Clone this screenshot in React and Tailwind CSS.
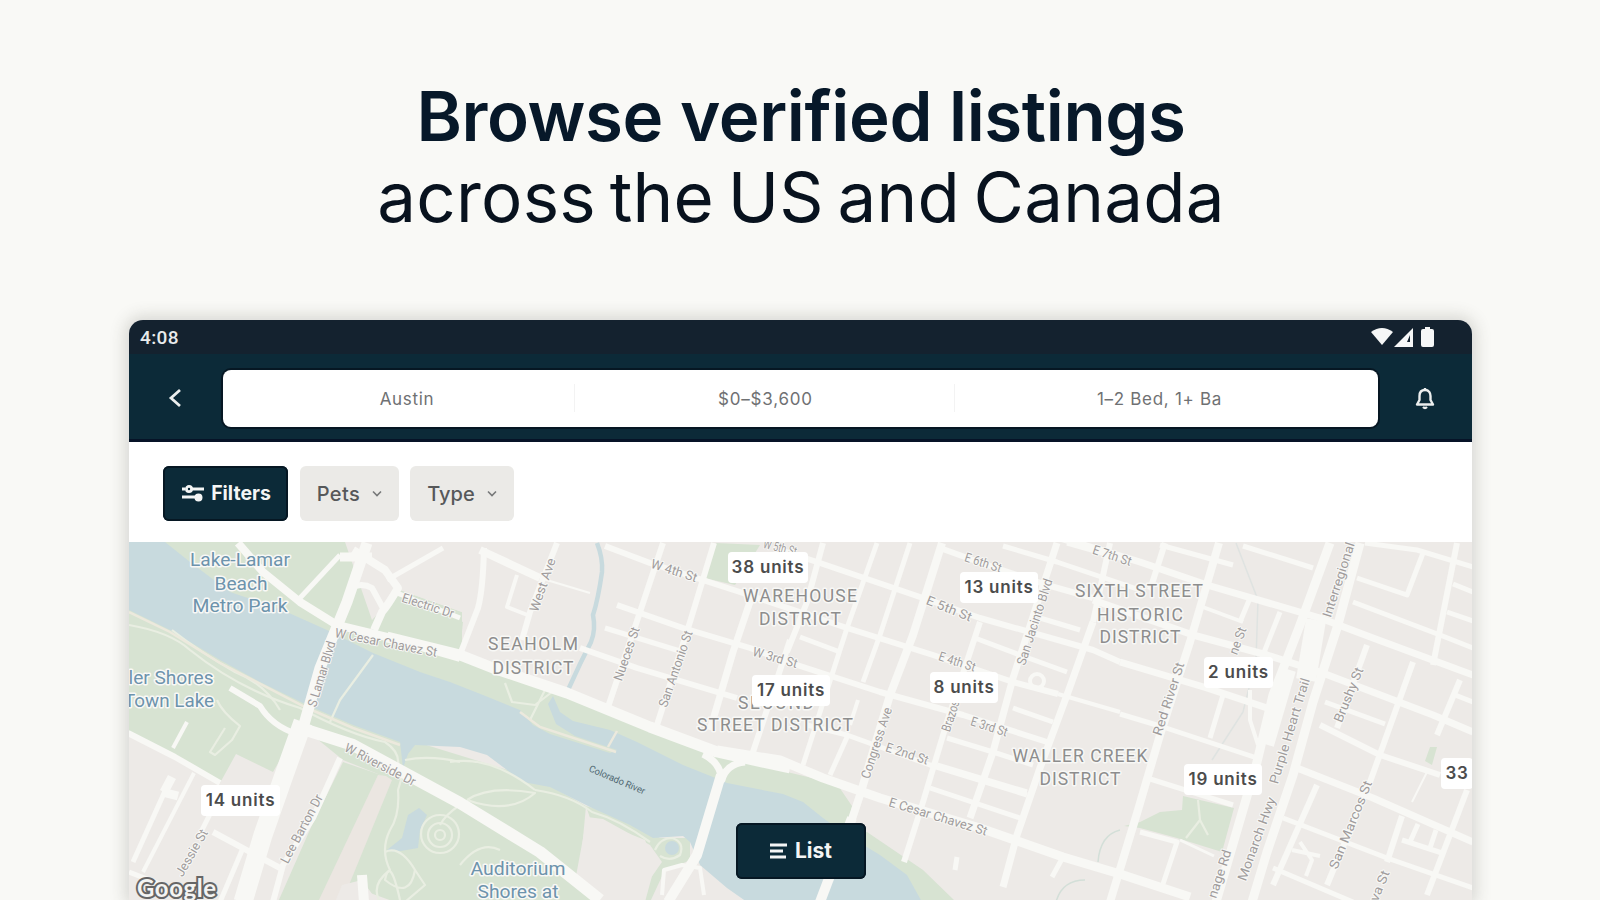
import React from 'react';

const streets = [
    // north shore blocks
    { d: 'M480 550 L540 578', w: 8 },
    { d: 'M540 578 L590 593', w: 2 },
    { d: 'M484 548 Q483 590 478 608 L461 652', w: 6 },
    { d: 'M557 543 L530 612 L522 640', w: 6 },
    { d: 'M517 575 L507 607 L530 616', w: 4 },
    { d: 'M397 593 L460 618', w: 5 },
    { d: 'M605 546 L650 563 L743 593 L847 628 L933 655 L1013 682 L1058 694', w: 6 },
    { d: 'M1058 694 L1120 712', w: 4 },
    { d: 'M617 605 L683 628 L750 648 L797 665 L880 692 L963 715 L1047 742', w: 6 },
    { d: 'M580 648 L637 668 L737 698', w: 6 },
    { d: 'M605 628 L683 652', w: 5 },
    { d: 'M807 725 L847 735 L930 765 L1027 795', w: 5 },
    { d: 'M800 637 L840 652', w: 5 },
    { d: 'M780 550 L817 562 L923 598 L980 618 L1093 650 L1120 662', w: 6 },
    { d: 'M663 543 L640 612 L607 710', w: 6 },
    { d: 'M714 543 L690 622 L657 725', w: 6 },
    { d: 'M754 590 L733 652 L710 730', w: 7 },
    { d: 'M790 640 L753 752', w: 6 },
    { d: 'M823 543 L807 602 L787 652', w: 6 },
    { d: 'M877 543 L847 628 L803 765', w: 5 },
    { d: 'M858 700 L850 725', w: 4 },
    { d: 'M910 543 L880 635 L863 682', w: 5 },
    { d: 'M848 735 L830 775', w: 5 },
    { d: 'M942 543 L913 635 L890 695 L860 795 L850 825', w: 8 },
    { d: 'M980 622 L947 722 L923 802 L904 862', w: 6 },
    { d: 'M1057 543 L1013 678 L993 752 L970 818', w: 7 },
    { d: 'M1093 622 L1067 695 L1040 768 L1017 835 L1003 887', w: 7 },
    { d: 'M1110 543 L1093 622', w: 6 },
    { d: 'M947 738 L993 752 L1033 765', w: 5 },
    { d: 'M937 765 L1027 792', w: 5 },
    { d: 'M930 788 L1020 818', w: 5 },
    { d: 'M1013 708 L1053 722', w: 5 },
    { d: 'M975 638 L1020 655 L1067 672', w: 5 },
    { d: 'M1040 618 L1080 630', w: 5 },
    { d: 'M940 548 L987 565 L1047 585 L1093 598', w: 6 },
    { d: 'M1003 546 L1057 562 L1140 590', w: 5 },
    { d: 'M1067 543 L1120 558', w: 5 },
    { d: 'M957 857 L955 870', w: 5 },
    { d: 'M1063 857 L1052 877', w: 5 },
    // east side grid
    { d: 'M1060 538 L1140 562 L1207 585 L1320 618 L1373 638 L1473 675', w: 7 },
    { d: 'M1160 545 L1233 565', w: 5 },
    { d: 'M1243 546 L1313 568', w: 5 },
    { d: 'M1200 606 L1243 622', w: 4 },
    { d: 'M1093 600 L1193 635 L1267 655 L1320 672 L1433 715 L1473 732', w: 7 },
    { d: 'M1120 662 L1207 688 L1267 708', w: 7 },
    { d: 'M1120 714 L1160 726 L1257 758', w: 5 },
    { d: 'M1320 725 L1380 755 L1440 775', w: 6 },
    { d: 'M1147 778 L1233 805', w: 5 },
    { d: 'M1297 768 L1373 798 L1473 842', w: 7 },
    { d: 'M1283 818 L1387 858 L1473 888', w: 5 },
    { d: 'M1273 868 L1353 902', w: 5 },
    { d: 'M1357 578 L1407 595 L1423 553', w: 5 },
    { d: 'M1353 602 L1440 635 L1473 648', w: 5 },
    { d: 'M1365 543 L1417 550 L1473 567', w: 5 },
    { d: 'M1453 584 L1473 592 M1447 612 L1473 621', w: 5 },
    { d: 'M1325 702 L1385 724', w: 5 },
    { d: 'M1455 695 L1473 702', w: 5 },
    { d: 'M1165 543 L1150 590', w: 6 },
    { d: 'M1219 543 L1190 642 L1160 735 L1138 810 L1110 902', w: 8 },
    { d: 'M1250 598 L1240 622', w: 5 },
    { d: 'M1280 612 L1263 655', w: 5 },
    { d: 'M1223 695 L1210 738', w: 5 },
    { d: 'M1250 690 L1250 720 L1258 745', w: 4 },
    { d: 'M1367 645 L1337 728', w: 6 },
    { d: 'M1413 662 L1370 782 L1327 885', w: 6 },
    { d: 'M1457 543 L1433 665', w: 6 },
    { d: 'M1460 680 L1437 735', w: 6 },
    { d: 'M1428 770 L1412 802', w: 2 },
    { d: 'M1467 790 L1427 895', w: 6 },
    { d: 'M1402 816 L1387 862', w: 6 },
    { d: 'M1317 785 L1273 885', w: 6 },
    { d: 'M1418 824 L1410 842 M1436 830 L1430 848 M1402 840 L1442 853', w: 5 },
    { d: 'M1300 842 L1312 860 L1306 876 M1292 850 L1320 856', w: 4 },
    { d: 'M1140 832 L1177 842 L1163 884', w: 5 },
    { d: 'M1180 840 L1214 856', w: 3 },
    // south west
    { d: 'M230 688 L260 706 Q272 726 297 734', w: 6 },
    { d: 'M128 733 L175 757 L220 783', w: 6 },
    { d: 'M187 722 L173 748', w: 4 },
    { d: 'M194 773 L143 872', w: 4 },
    { d: 'M170 780 L133 862', w: 5 },
    { d: 'M172 777 L164 792 M162 792 L178 796', w: 9 },
    { d: 'M213 832 L280 868', w: 6 },
    { d: 'M243 848 L220 902', w: 5 },
    { d: 'M212 810 L200 834', w: 5 },
    { d: 'M340 758 L313 818 L283 865 L273 902', w: 6 },
    { d: 'M362 875 L364 902', w: 10 },
    { d: 'M129 872 L160 884', w: 5 },
];

const mainRoads = [
    { d: 'M238 543 L263 572 L300 602 L337 625 L387 637 L460 658', w: 8 },
    { d: 'M387 637 L460 655 L493 668 L567 693 L650 727 L717 752 L790 768', w: 11 },
    { d: 'M717 750 L780 760 L823 778 L880 798 L980 828 L1063 857 L1120 874 L1190 897', w: 9 },
    { d: 'M367 543 L347 602 L320 668 L303 728', w: 11 },
    { d: 'M303 722 L283 778 L263 835 L243 902', w: 19 },
    { d: 'M300 728 L353 745 L460 803 L540 852 L600 900', w: 12 },
    { d: 'M340 555 L300 598', w: 5 },
    { d: 'M353 550 L385 570 L398 588 Q388 605 382 612 L374 630', w: 8 },
    { d: 'M443 548 L387 580', w: 5 },
    { d: 'M350 588 Q362 582 372 588 L384 610', w: 6 },
    { d: 'M340 557 L372 557', w: 9 },
    { d: 'M703 754 Q720 762 722 780 Q726 764 745 762', w: 7 },
    { d: 'M721 775 L697 855 L668 902', w: 10 },
    { d: 'M852 818 L820 902', w: 10 },
    { d: 'M662 895 L664 870 L682 865 L700 868 L704 895', w: 4 },
    { d: 'M1330 543 L1300 625 L1273 695 L1257 762 L1216 902', w: 9 },
    { d: 'M1360 543 L1337 628 L1313 702 L1293 775 L1267 852 L1252 902', w: 9 },
    { d: 'M1316 620 L1306 680', w: 20 },
    { d: 'M1290 670 L1268 745', w: 12 },
];

const trails = [
    'M129 625 Q170 632 190 650 Q240 690 300 708 Q350 735 385 742 Q400 752 398 765',
    'M172 630 Q200 652 235 672 Q265 684 280 710',
    'M373 655 L340 700 L330 722',
    'M217 700 Q222 712 240 726 L232 740 L215 755 L210 752 L225 728',
    'M405 760 Q430 755 460 762 M404 770 L398 790 Q400 815 390 830 Q380 850 390 870 Q370 885 380 902',
    'M467 800 Q490 785 535 793 Q510 815 467 800 M450 762 Q490 755 535 790',
    'M535 790 Q570 795 592 812 Q620 820 650 842',
    'M505 683 L512 702 L535 705 L552 692 M530 720 L545 690',
    'M385 852 Q400 845 415 870 Q410 900 385 880 Q390 855 400 900',
    'M415 870 L425 885 L405 902',
    'M460 805 Q445 815 440 825 M460 865 Q480 840 500 850',
    'M1198 800 L1200 820 L1208 835 M1200 820 L1186 838',
    'M655 850 Q660 838 672 838 Q685 842 680 855 Q670 862 660 856',
];

const streetLabels = [
    { t: 'W Cesar Chavez St', x: 386, y: 643, a: 11, len: 104 },
    { t: 'S Lamar Blvd', x: 322, y: 674, a: -73, len: 68 },
    { t: 'Electric Dr', x: 428, y: 606, a: 18, len: 54 },
    { t: 'W Riverside Dr', x: 380, y: 765, a: 27, len: 78 },
    { t: 'Lee Barton Dr', x: 302, y: 829, a: -62, len: 76 },
    { t: 'Jessie St', x: 192, y: 853, a: -60, len: 52 },
    { t: 'West Ave', x: 543, y: 585, a: -71, len: 56 },
    { t: 'W 4th St', x: 674, y: 571, a: 18, len: 48 },
    { t: 'Nueces St', x: 627, y: 654, a: -71, len: 56 },
    { t: 'San Antonio St', x: 676, y: 669, a: -71, len: 80 },
    { t: 'W 3rd St', x: 775, y: 658, a: 16, len: 46 },
    { t: 'W 5th St', x: 780, y: 548, a: 14, len: 34 },
    { t: 'E 5th St', x: 949, y: 609, a: 22, len: 48 },
    { t: 'E 6th St', x: 983, y: 563, a: 18, len: 38 },
    { t: 'E 7th St', x: 1112, y: 556, a: 18, len: 40 },
    { t: 'E 4th St', x: 957, y: 662, a: 18, len: 38 },
    { t: 'E 3rd St', x: 989, y: 727, a: 18, len: 38 },
    { t: 'E 2nd St', x: 907, y: 754, a: 18, len: 44 },
    { t: 'E Cesar Chavez St', x: 938, y: 817, a: 17, len: 102 },
    { t: 'Congress Ave', x: 877, y: 743, a: -72, len: 74 },
    { t: 'Brazos', x: 951, y: 716, a: -72, len: 32 },
    { t: 'San Jacinto Blvd', x: 1035, y: 622, a: -72, len: 90 },
    { t: 'Red River St', x: 1169, y: 699, a: -72, len: 76 },
    { t: 'ne St', x: 1238, y: 641, a: -70, len: 28 },
    { t: 'Interregional', x: 1339, y: 580, a: -72, len: 78 },
    { t: 'Brushy St', x: 1349, y: 695, a: -68, len: 58 },
    { t: 'Purple Heart Trail', x: 1290, y: 731, a: -73, len: 110 },
    { t: 'Monarch Hwy', x: 1257, y: 839, a: -70, len: 88 },
    { t: 'San Marcos St', x: 1351, y: 825, a: -68, len: 94 },
    { t: 'nage Rd', x: 1220, y: 874, a: -72, len: 50 },
    { t: 'va St', x: 1380, y: 886, a: -68, len: 32 },
];

const districts = [
    { t: 'SEAHOLM', x: 533, y: 650, len: 90 },
    { t: 'DISTRICT', x: 533, y: 674, len: 81 },
    { t: 'WAREHOUSE', x: 800, y: 602, len: 114 },
    { t: 'DISTRICT', x: 800, y: 625, len: 82 },
    { t: 'SECOND', x: 776, y: 709, len: 76 },
    { t: 'STREET DISTRICT', x: 775, y: 731, len: 156 },
    { t: 'SIXTH STREET', x: 1139, y: 597, len: 128 },
    { t: 'HISTORIC', x: 1140, y: 621, len: 86 },
    { t: 'DISTRICT', x: 1140, y: 643, len: 81 },
    { t: 'WALLER CREEK', x: 1080, y: 762, len: 135 },
    { t: 'DISTRICT', x: 1080, y: 785, len: 81 },
];

const parks = [
    { t: 'Lake-Lamar', x: 240, y: 566, len: 100 },
    { t: 'Beach', x: 241, y: 590, len: 53 },
    { t: 'Metro Park', x: 240, y: 612, len: 95 },
    { t: 'ler Shores', x: 171, y: 684, len: 85 },
    { t: 'Town Lake', x: 169, y: 707, len: 90 },
    { t: 'Auditorium', x: 518, y: 875, len: 95 },
    { t: 'Shores at', x: 518, y: 898, len: 81 },
];

const pins = [
    { t: '38 units', c: 'left-[599px] top-[10px] w-[80px]' },
    { t: '13 units', c: 'left-[831px] top-[30px] w-[78px]' },
    { t: '17 units', c: 'left-[623px] top-[133px] w-[78px]' },
    { t: '8 units', c: 'left-[801px] top-[130px] w-[68px]' },
    { t: '2 units', c: 'left-[1075px] top-[115px] w-[69px]' },
    { t: '19 units', c: 'left-[1055px] top-[222px] w-[78px]' },
    { t: '14 units', c: 'left-[72px] top-[243px] w-[79px]' },
    { t: '33', c: 'left-[1312px] top-[216px] w-[32px]' },
];

const MapCanvas = () => (
    <svg className="block w-full h-full" viewBox="129 542 1343 358" preserveAspectRatio="xMinYMin slice">
        <rect x="129" y="542" width="1343" height="358" fill="#edeae7" />

        {/* parks */}
        <g fill="#d7e3d2">
            <path d="M160 542 H345 L372 620 L400 590 L462 612 V652 L567 695 L717 755 L837 784 L852 806 L848 840 L780 800 L560 760 L129 640 Z" />
            <path d="M867 832 L923 870 L956 902 H900 L850 835 Z" />
            <path d="M129 600 L310 700 L410 740 L540 780 L586 806 L580 870 L600 902 H395 L340 882 L383 776 L343 760 L300 725 L273 772 L236 754 L220 783 L129 735 Z" />
            <path d="M343 762 L384 776 L328 902 H278 L312 825 Z" />
            <path d="M586 806 L620 815 L660 838 L690 838 L690 860 L664 872 L650 902 H645 L655 865 L645 840 L590 818 Z" />
            <path d="M716 543 L760 545 L735 585 L704 578 Z" />
            <path d="M450 618 L463 622 L460 650 L450 648 Z" />
            <path d="M1140 822 L1160 812 L1182 810 L1183 796 L1234 808 L1222 852 L1177 838 L1140 828 L1124 826 Z" />
            <path d="M1430 747 L1437 747 L1432 765 L1425 761 Z" />
        </g>
        <path d="M384 542 H462 V612 L400 590 L384 565 Z" fill="#edeae7" />
        <path d="M386 776 L392 780 L342 902 H318 L378 775 Z" fill="#ebe6e1" />
        <path d="M342 885 L362 880 L378 902 H335 Z" fill="#edeae7" />
        <path d="M587 817 L603 819 L650 845 L662 862 L646 885 L640 902 H600 L576 876 Z" fill="#edeae7" />

        {/* river */}
        <path
            fill="#c8dade"
            d="M129 542 L165 542 L190 562 L230 592 L280 609 L327 630 L373 653 L420 672 L450 682 L483 695 L520 710 L533 725 L550 734 L610 753 L617 750 L575 736 L556 724 L548 704 L553 696 L560 712 L573 721 L610 730 L637 742 L683 765 L713 777 L727 783 L783 794 L803 802 L823 818 L847 835 L880 855 L907 875 L922 902 L747 902 L727 888 L700 865 L690 842 L683 836 L653 838 L630 825 L590 807 L550 787 L523 782 L487 755 L460 747 L415 745 L408 754 L403 768 L400 742 L353 725 L307 705 L260 682 L220 660 L170 630 L129 610 Z"
        />
        <path d="M597 543 Q603 558 602 572 Q598 600 593 615 Q596 630 591 642 L580 664 L568 690" fill="none" stroke="#c8dade" strokeWidth="4.5" />
        <path d="M419 808 L427 815 L420 830 L418 848 L395 852 L387 850 L402 838 L408 815 Z" fill="#c8dade" />
        <circle cx="672" cy="848" r="7" fill="#c8dade" />
        <path d="M1236 543 L1258 600 L1256 660 L1243 712 L1212 760" fill="none" stroke="#dfe3e1" strokeWidth="1.5" />
        <path d="M1120 830 Q1100 835 1098 862 M1085 880 Q1062 880 1056 902" fill="none" stroke="#d3dfd8" strokeWidth="1.5" />

        <g fill="none" stroke="#e9eee2" strokeWidth="2.2" strokeLinejoin="round">
            {trails.map((d) => (
                <path key={d} d={d} />
            ))}
            <circle cx="440" cy="834" r="19" />
            <circle cx="440" cy="835" r="12" />
            <circle cx="440" cy="835" r="5" />
        </g>
        <path d="M129 612 L170 632 L220 663 L307 708 L353 728 L400 745 M520 712 L540 727 L616 752 M608 747 L617 731" fill="none" stroke="#ece9dd" strokeWidth="2.5" />

        <g fill="none" stroke="#f8f8f5" strokeLinejoin="round">
            {streets.map((s) => (
                <path key={s.d} d={s.d} strokeWidth={s.w} />
            ))}
            {mainRoads.map((s) => (
                <path key={s.d} d={s.d} strokeWidth={s.w} />
            ))}
            <circle cx="1037" cy="681" r="7" strokeWidth="4" />
        </g>

        {/* labels */}
        <g
            fontFamily="Roboto, sans-serif"
            textAnchor="middle"
            stroke="#f8f8f6"
            strokeWidth="3"
            strokeLinejoin="round"
            style={{ paintOrder: 'stroke' }}
        >
            <g fontSize="13" fill="#a09c9c">
                {streetLabels.map((l) => (
                    <text
                        key={l.t + l.x}
                        transform={`translate(${l.x} ${l.y}) rotate(${l.a})`}
                        textLength={l.len}
                        lengthAdjust="spacingAndGlyphs"
                        dy="4"
                        strokeWidth="2"
                    >
                        {l.t}
                    </text>
                ))}
            </g>
            <text transform="translate(617 780) rotate(23)" fontSize="9.5" fill="#4f6771" textLength="60" dy="3" stroke="none">
                Colorado River
            </text>
            <g fontSize="17.5" fill="#8d8d8d">
                {districts.map((l) => (
                    <text key={l.t + l.y + l.x} x={l.x} y={l.y} textLength={l.len}>
                        {l.t}
                    </text>
                ))}
            </g>
            <g fontSize="18" fill="#6d93ac">
                {parks.map((l) => (
                    <text key={l.t} x={l.x} y={l.y} textLength={l.len} lengthAdjust="spacingAndGlyphs">
                        {l.t}
                    </text>
                ))}
            </g>
        </g>
        <text
            x="137"
            y="897"
            fontFamily="Lato, sans-serif"
            fontSize="24"
            fontWeight="700"
            fill="#f4f4f2"
            stroke="#666666"
            strokeWidth="4"
            textLength="79"
            style={{ paintOrder: 'stroke' }}
        >
            Google
        </text>
    </svg>
);

const ChevronDown = () => (
    <svg className="w-[10px] h-[8px]" viewBox="0 0 10 8" fill="none" stroke="#77797a" strokeWidth="1.6">
        <path d="M1 1.5 L5 5.5 L9 1.5" />
    </svg>
);

const StatusBar = () => (
    <div className="h-[34px] bg-[#14222f] flex items-start justify-between pl-[11px] pr-[36px]">
        <span className="mt-[6px] text-[19px] leading-[24px] font-medium text-[#e9ebec] font-['Roboto',sans-serif] tracking-[0.4px]">4:08</span>
        <svg className="mt-[6px] w-[66px] h-[22px]" viewBox="0 0 66 22" fill="#f6f7f7">
            <path d="M1 6 Q12 -2 23 6 L12 19 Z" />
            <path fillRule="evenodd" d="M43 2 V21 H24 Z M40 9 L37 16 H40 Z" />
            <path d="M55 3 V1 H60 V3 H62 Q64 3 64 5 V19 Q64 21 62 21 H53 Q51 21 51 19 V5 Q51 3 53 3 Z" />
        </svg>
    </div>
);

const SearchHeader = () => (
    <div className="h-[88px] bg-[#0c2a38] border-b-[3px] border-[#061327] flex items-center pt-[1px]">
        <div className="w-[94px] flex justify-center pr-[2px]">
            <svg className="w-[16px] h-[22px] mt-[2px]" viewBox="0 0 16 22" fill="none" stroke="#eceeee" strokeWidth="2.8">
                <path d="M13 3 L4 11 L13 19" />
            </svg>
        </div>
        <div className="w-[1155px] h-[57px] mt-[2px] bg-white rounded-lg shadow-[0_0_0_2px_#061723] flex items-center text-[17px] leading-[28px] text-[#6f7173]">
            <div className="w-[351px] pt-[2px] pl-[17px] text-center tracking-[0.7px]">Austin</div>
            <div className="w-[381px] h-[28px] leading-[30px] border-x border-[#f3f3f3] pl-[2px] text-center tracking-[0.8px]">$0–$3,600</div>
            <div className="flex-1 pt-[2px] pr-[14px] text-center tracking-[0.7px]">1–2 Bed, 1+ Ba</div>
        </div>
        <div className="flex-1 flex justify-center">
            <svg className="w-[22px] h-[26px] mt-[2px]" viewBox="0 0 22 26" fill="none" stroke="#eceeee" strokeWidth="2.4" strokeLinejoin="round">
                <path d="M11 3 V5 M11 5 C7 5 5.5 8 5.5 11 V15 L3 19.5 H19 L16.5 15 V11 C16.5 8 15 5 11 5 Z" />
                <path d="M9 22 Q11 24 13 22" />
            </svg>
        </div>
    </div>
);

const FilterBar = () => (
    <div className="h-[100px] bg-white flex pt-[24px] pl-[34px] text-[20px] font-medium">
        <button className="w-[125px] h-[55px] mr-[12px] rounded-md bg-[#0c2a38] shadow-[inset_0_0_0_2px_#061723] text-[#f4f5f5] flex items-center justify-center gap-[6px] pl-[2px]">
            <svg className="w-[23px] h-[20px]" viewBox="0 0 23 20" fill="none" stroke="#f4f5f5" strokeWidth="2.8">
                <path d="M0 5 H3 M10 5 H22 M0 13 H13" />
                <circle cx="7" cy="5" r="2.6" />
                <circle cx="16.5" cy="13.5" r="2.6" fill="#f4f5f5" />
            </svg>
            <span className="text-[19.5px] font-bold">Filters</span>
        </button>
        <button className="w-[99px] h-[55px] mr-[11px] rounded-md bg-[#ebeae7] text-[#56585a] flex items-center justify-center gap-[12px]">
            <span className="tracking-[0.4px]">Pets</span>
            <ChevronDown />
        </button>
        <button className="w-[104px] h-[55px] rounded-md bg-[#ebeae7] text-[#56585a] flex items-center justify-center gap-[12px]">
            <span>Type</span>
            <ChevronDown />
        </button>
    </div>
);

const App = () => {
    return (
        <div className="w-[1600px] h-[900px] overflow-hidden bg-[#f9f9f6] font-['Inter',sans-serif] flex flex-col items-center">
            <h1 className="h-[320px] shrink-0 pt-[76px] pl-[2px] text-center text-[#071829] whitespace-nowrap">
                <span className="block text-[69px] leading-[81px] font-semibold tracking-[-0.4px]">Browse verified listings</span>
                <span className="block text-[69px] leading-[81px] font-normal text-[#08121e] tracking-[0.25px] [word-spacing:-6px]">across the US and Canada</span>
            </h1>

            <div className="w-[1343px] h-[580px] shrink-0 ml-px rounded-t-[14px] overflow-hidden shadow-[0_0_16px_4px_rgba(60,60,50,0.18)]">
                <StatusBar />
                <SearchHeader />
                <FilterBar />
                <div className="relative h-[358px] overflow-hidden">
                    <MapCanvas />
                    {pins.map((p) => (
                        <div
                            key={p.t}
                            className={`absolute ${p.c} h-[31px] leading-[31px] rounded-sm bg-white text-center text-[17px] font-semibold text-[#4c4c4c] tracking-[0.8px] whitespace-nowrap`}
                        >
                            {p.t}
                        </div>
                    ))}
                    <button className="absolute left-[607px] top-[281px] w-[130px] h-[56px] rounded-md bg-[#0c2a38] shadow-[inset_0_0_0_2px_#061723] flex items-center justify-center gap-[8px] text-[21px] font-bold text-[#f4f5f5]">
                        <svg className="w-[17px] h-[17px]" viewBox="0 0 17 17" fill="none" stroke="#f4f5f5" strokeWidth="2.8">
                            <path d="M0 2 H17 M0 8 H13 M0 14 H16" />
                        </svg>
                        <span>List</span>
                    </button>
                </div>
            </div>
        </div>
    );
};

export default App;
